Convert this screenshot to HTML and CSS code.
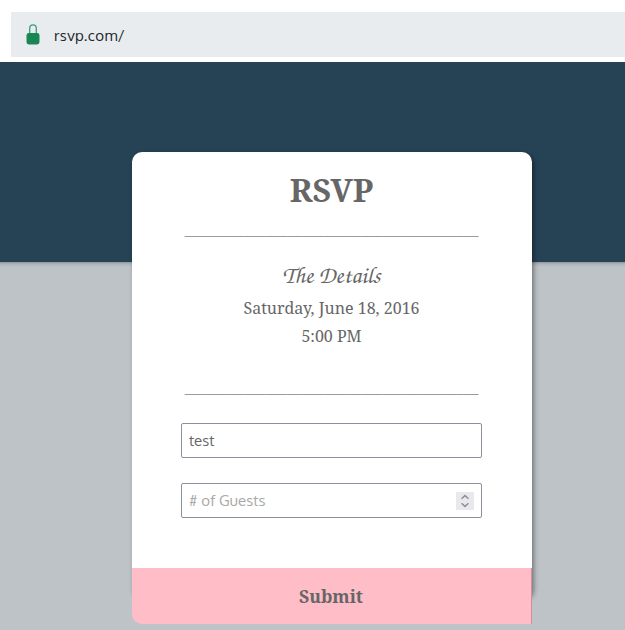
FILE: index.html
```html
<!DOCTYPE html>
<html lang="en">
<head>
<meta charset="utf-8">
<title>RSVP</title>
<link rel="stylesheet" href="styles.css">
</head>
<body>
<header class="browser">
  <div class="address">
    <svg class="lock" width="14" height="21" viewBox="0 0 14 21"><path d="M3.7 10V4.4C3.7 2.2 5 .9 7 .9s3.3 1.3 3.3 3.5V10" fill="none" stroke="#38a071" stroke-width="1.3"/><rect x=".5" y="9" width="13" height="11.5" rx="2.4" fill="#198754"/></svg>
    <span class="url">rsvp.com/</span>
  </div>
</header>
<main class="page">
  <form class="card">
    <h1 class="title">RSVP</h1>
    <div class="rule">________________________________________</div>
    <h2 class="details">The Details</h2>
    <p class="line date">Saturday, June 18, 2016</p>
    <p class="line time">5:00 PM</p>
    <div class="rule rule-second">________________________________________</div>
    <input class="field" type="text" value="test">
    <div class="field guests">
      <span class="placeholder"># of Guests</span>
      <span class="spinner"><svg width="18" height="18" viewBox="0 0 18 18" fill="none" stroke="#8f8f9d" stroke-width="1.5"><path d="M5.5 6.7 9 3.6l3.5 3.1M5.5 11.3 9 14.4l3.5-3.1"/></svg></span>
    </div>
    <button class="submit" type="button">Submit</button>
  </form>
</main>
</body>
</html>
```
FILE: styles.css
```css
* { box-sizing: border-box; }
body {
  margin: 0;
  height: 630px;
  overflow: hidden;
  background: #bdc3c7;
  color: #666;
  font-family: "Noto Serif", "Droid Serif", "DejaVu Serif Condensed", "DejaVu Serif", serif;
}
.browser {
  height: 62px;
  padding: 12px 0 0 11px;
  background: #fff;
}
.address {
  display: flex;
  align-items: center;
  height: 45px;
  padding: 0 0 0 15px;
  background: #e8ecef;
}
.url {
  margin-left: 14px;
  padding-top: 2px;
  color: #212529;
  font: 15px/22px Oxygen, "Noto Sans", sans-serif;
  letter-spacing: .35px;
}
.page {
  height: 568px;
  padding-top: 90px;
  background: linear-gradient(#264356 200px, #8f969b 200px, #aeb4b8 202px, #bdc3c7 205px);
}
.card {
  display: flex;
  flex-direction: column;
  align-items: center;
  width: 400px;
  height: 446px;
  margin-left: 132px;
  padding-right: 1px;
  border-radius: 10px;
  background: #fff;
  box-shadow: 2px 2px 5px rgba(0, 0, 0, .4);
}
.title {
  margin: 16px 0 0;
  height: 46px;
  font-size: 32px;
  line-height: 44px;
}
.rule {
  height: 20px;
  margin-top: 8px;
  color: #858585;
  font: 14.7px/20px "Liberation Serif", serif;
  white-space: nowrap;
}
.details {
  height: 32px;
  margin: 18px 0 0;
  font: 400 24px/32px Z003, "URW Chancery L", "TeX Gyre Chorus", "Monotype Corsiva", "Apple Chancery", "Liberation Serif", serif;
}
.line {
  height: 28px;
  margin: 0;
  font-size: 16px;
  line-height: 28px;
  white-space: nowrap;
}
.date { margin-top: 4px; }
.rule-second { margin-top: 28px; }
.field {
  flex: none;
  width: 301px;
  height: 35px;
  margin: 25px 0 0;
  padding: 0 7px;
  border: 1px solid #8f8f9d;
  border-radius: 2px;
  outline: 0;
  background: #fff;
  color: #666;
  font: 15px/33px Oxygen, "Noto Sans", sans-serif;
}
.guests {
  display: flex;
  align-items: center;
  justify-content: space-between;
}
.placeholder {
  color: #a9a9a9;
  letter-spacing: .1px;
}
.spinner {
  width: 18px;
  height: 18px;
  background: #e9e9ed;
}
.spinner svg { display: block; }
.submit {
  flex: none;
  align-self: flex-start;
  width: 400px;
  height: 56px;
  margin: 50px 0 0;
  padding: 0 1px 0 0;
  border: 0;
  border-right: 1px solid #d18e99;
  border-radius: 0 0 0 10px;
  background: #ffbdc7;
  color: #666;
  font-family: inherit;
  font-size: 17.6px;
  font-weight: 700;
}
```
